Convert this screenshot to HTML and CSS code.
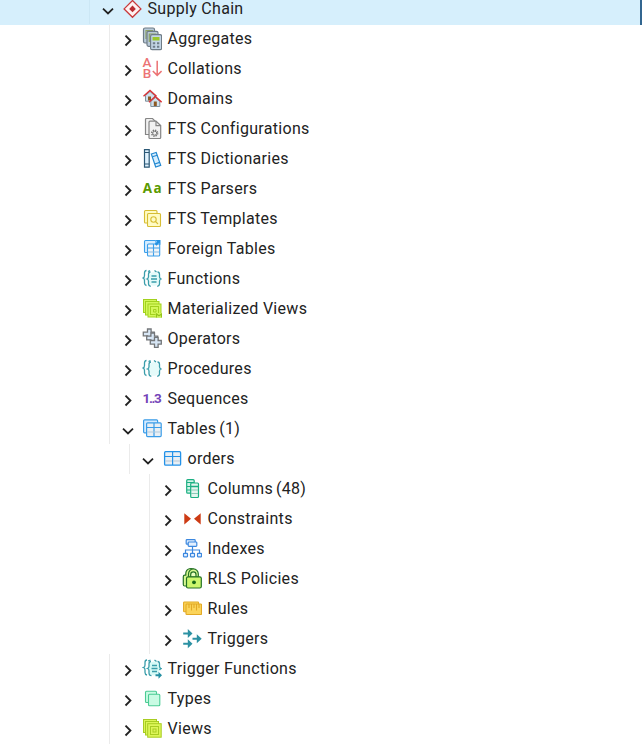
FILE: index.html
```
<!DOCTYPE html>
<html lang="en">
<head>
<meta charset="utf-8">
<title>Object Explorer</title>
<link rel="stylesheet" href="styles.css">
</head>
<body>
<svg class="defs" aria-hidden="true">
  <symbol id="right" viewBox="0 0 12 14"><path d="M3.500 1.700l4.900 4.900-4.900 4.900" fill="none" stroke="#222" stroke-width="1.900"/></symbol>
  <symbol id="down" viewBox="0 0 12 14"><path d="M1 4.700l5 4.700 5-4.700" fill="none" stroke="#222" stroke-width="1.800"/></symbol>
</svg>
<ul class="tree">
  <li class="row l0 selected"><svg class="chev"><use href="#down"/></svg>
    <svg class="icon" viewBox="0 0 20 24"><path d="M10.500 3.500l8.400 8.400-8.400 8.400-8.400-8.400z" fill="#fff1f1" stroke="#c8393b" stroke-width="1.300"/><path d="M10.500 8.600l3.300 3.300-3.300 3.300-3.300-3.300z" fill="#b92d32"/></svg>
    <span class="label">Supply Chain</span></li>
  <li class="row l1"><svg class="chev"><use href="#right"/></svg>
    <svg class="icon" viewBox="0 0 20 24"><g fill="#b9cad9" stroke="#6f7c87" stroke-width="1.200"><rect x="1.500" y="1" width="11" height="15" rx="1.500"/><path d="M4 12V3.500h7" fill="none" stroke="#8fa463"/><rect x="5" y="4.300" width="11" height="15" rx="1.500"/><path d="M7.300 15V7h7" fill="none" stroke="#8fa463"/><rect x="8.600" y="7.700" width="11" height="15" rx="1.500" fill="#c3d5e5"/></g><path d="M10.500 10h7v3.500h-7z" fill="#9bc72d"/><path d="M10.800 15.200h2.400v2h-2.400zM15 15.200h2.300v2H15zM10.800 18.700h2.400v2h-2.400zM15 18.700h2.300v2H15z" fill="#6f7d89"/></svg>
    <span class="label">Aggregates</span></li>
  <li class="row l1"><svg class="chev"><use href="#right"/></svg>
    <svg class="icon" viewBox="0 0 20 24"><g class="glyph collate"><text x="0.600" y="9.900">A</text><text x="0.800" y="21">B</text></g><path d="M15.200 3.700v14.500M10.800 14l4.400 4.400 4.400-4.400" fill="none" stroke="#ec7375" stroke-width="1.500"/></svg>
    <span class="label">Collations</span></li>
  <li class="row l1"><svg class="chev"><use href="#right"/></svg>
    <svg class="icon" viewBox="0 0 20 24"><path d="M3.500 8.500L8 4.500l4.500 4v5.700h-9z" fill="#cfe0ee" stroke="#81909c"/><path d="M6 9.500h3v4H6z" fill="#8d5a24"/><path d="M1.500 9.300L8 3.500l6.500 5.800" fill="none" stroke="#d93236" stroke-width="1.400"/><path d="M8.800 14.500l4.500-4 4.500 4v5h-9z" fill="#cfe0ee" stroke="#81909c"/><path d="M11.800 14.500h3V19h-3z" fill="#8d5a24"/><path d="M7 15.200l6.300-5.700 6.300 5.700" fill="none" stroke="#d93236" stroke-width="1.400"/></svg>
    <span class="label">Domains</span></li>
  <li class="row l1"><svg class="chev"><use href="#right"/></svg>
    <svg class="icon" viewBox="0 0 20 24"><g fill="#f1f1f1" stroke="#858585" stroke-width="1.200"><path d="M3.500 17.500V2.500q0-1 1-1h6l4 4v12z"/><path d="M7 20.800V5.200q0-1 1-1h6l4.700 4.300v12q0 1-1 1H8q-1 0-1-.7z"/><path d="M14 4.300v4.400h4.700" fill="none"/></g><circle cx="12.700" cy="16.200" r="3" fill="none" stroke="#757575" stroke-width="1.400" stroke-dasharray="1.350 1"/><circle cx="12.700" cy="16.200" r="2" fill="#f1f1f1" stroke="#757575"/></svg>
    <span class="label">FTS Configurations</span></li>
  <li class="row l1"><svg class="chev"><use href="#right"/></svg>
    <svg class="icon" viewBox="0 0 20 24"><g fill="#dff1fd" stroke="#2b5876" stroke-width="1.200"><path d="M2.500 2.600h4.700v17.600H2.500z"/><path d="M2.500 5.500h4.700M2.500 17h4.700" /></g><g fill="#d8efff" stroke="#2388d0" stroke-width="1.200"><path d="M9.300 7l4.900-1.500 4.500 12.800-5 1.700z"/><path d="M10.300 9.700l5-1.500M12.700 17l5-1.600"/></g></svg>
    <span class="label">FTS Dictionaries</span></li>
  <li class="row l1"><svg class="chev"><use href="#right"/></svg>
    <svg class="icon" viewBox="0 0 20 24"><text class="glyph parser" x="0.700" y="16.300" textLength="19">Aa</text></svg>
    <span class="label">FTS Parsers</span></li>
  <li class="row l1"><svg class="chev"><use href="#right"/></svg>
    <svg class="icon" viewBox="0 0 20 24"><g fill="#fffbc4" stroke="#d7bd34" stroke-width="1.100"><rect x="2.500" y="3.500" width="12.500" height="12.500" rx="1"/><rect x="5.500" y="6.500" width="13" height="13" rx="1"/><circle cx="11.500" cy="12.500" r="2.700"/><path d="M13.500 14.500l2.500 2.500"/></g></svg>
    <span class="label">FTS Templates</span></li>
  <li class="row l1"><svg class="chev"><use href="#right"/></svg>
    <svg class="icon" viewBox="0 0 20 24"><g fill="#d7edff" stroke="#3b9fea" stroke-width="1.100"><rect x="2.500" y="3.500" width="11.500" height="12" rx="1"/><rect x="5.500" y="7" width="12.200" height="12" rx="1" fill="#f2f5f8"/><path d="M5.500 11h12M11.500 7v12"/><path d="M6 15h11" stroke="#91c0e5"/></g><path d="M13.500 3h5v5l-1.700-1.700-2.300 2.500-1.700-1.700 2.300-2.400z" fill="#2492e3"/></svg>
    <span class="label">Foreign Tables</span></li>
  <li class="row l1"><svg class="chev"><use href="#right"/></svg>
    <svg class="icon" viewBox="0 0 20 24"><ellipse cx="12" cy="12" rx="5.500" ry="7" fill="#e5fbfa"/><g fill="none" stroke="#3a9daa" stroke-width="1.300"><path d="M4.500 3.500Q2.500 3.500 2.500 6v2.500q0 2-1.500 2.500 1.500.5 1.500 2.500V16q0 2 2 2.500M8.500 5Q6.500 5 6.500 7.500v2.300q0 1.700-1.500 2.200 1.500.5 1.500 2.300v2.200q0 2.500 2.300 2.800M15.500 5q2 0 2 2.500v2.300q0 1.700 1.500 2.200-1.500.5-1.500 2.300v2.200q0 2.500-2.300 2.800M6 4.500l2-1M12.500 3.500l2 1.500"/><path d="M9.500 9h5M9 12h6M9.500 15h5"/></g></svg>
    <span class="label">Functions</span></li>
  <li class="row l1"><svg class="chev"><use href="#right"/></svg>
    <svg class="icon" viewBox="0 0 20 24"><g fill="#d3f75a" stroke="#a2d11e"><rect x="1.500" y="2.500" width="13" height="13"/><rect x="3.500" y="4.500" width="13.500" height="13.500"/><rect x="6" y="7" width="13" height="13"/><rect x="8.500" y="9.500" width="8" height="8"/><path d="M11.500 12.500h2.500v2.500h-2.500z"/></g><path d="M13.500 16H20v4.500h-6.500z" fill="#d3f75a"/><path d="M14.500 20.500V17l2.500 1.800 2.500-1.800v3.500" fill="none" stroke="#94c41b" stroke-width="1.200"/></svg>
    <span class="label">Materialized Views</span></li>
  <li class="row l1"><svg class="chev"><use href="#right"/></svg>
    <svg class="icon" viewBox="0 0 20 24"><g fill="#d7e6f5" stroke="#737679" stroke-width="1.300"><path id="plus" d="M5.500 2h3.600v3.200h3.200v3.600H9.100V12H5.500V8.800H1.300V5.200h4.200z"/><use href="#plus" x="3.400" y="4"/><use href="#plus" x="7" y="8.300"/></g></svg>
    <span class="label">Operators</span></li>
  <li class="row l1"><svg class="chev"><use href="#right"/></svg>
    <svg class="icon" viewBox="0 0 20 24"><ellipse cx="12" cy="12" rx="5.500" ry="7" fill="#e5fbfa"/><g fill="none" stroke="#3a9daa" stroke-width="1.300"><path d="M4.500 3.500Q2.500 3.500 2.500 6v2.500q0 2-1.500 2.500 1.500.5 1.500 2.500V16q0 2 2 2.500M9 5Q7 5 7 7.500v2.300q0 1.700-1.500 2.200 1.500.5 1.500 2.300v2.200q0 2.500 2.300 2.800M15.500 5q2 0 2 2.500v2.300q0 1.700 1.500 2.200-1.500.5-1.500 2.300v2.200q0 2.500-2.300 2.800M6.500 4.500l2-1M12 3.500l2 1.500"/></g></svg>
    <span class="label">Procedures</span></li>
  <li class="row l1"><svg class="chev"><use href="#right"/></svg>
    <svg class="icon" viewBox="0 0 20 24"><text class="glyph seq" x="0.500" y="16.300" textLength="19.300">1..3</text></svg>
    <span class="label">Sequences</span></li>
  <li class="row l1"><svg class="chev"><use href="#down"/></svg>
    <svg class="icon" viewBox="0 0 20 24"><g stroke="#3a9ce8" stroke-width="1.200"><rect x="1.600" y="2.800" width="14" height="13" rx="1" fill="#d5ebff"/><rect x="4.600" y="5.800" width="14.600" height="13.800" rx="1" fill="#e9eff4"/><path d="M4.800 10.500h14.500M12 6v13.500"/></g><path d="M5.300 15h13.400" stroke="#b1cadd"/></svg>
    <span class="label">Tables</span><span class="count">(1)</span></li>
  <li class="row l2"><svg class="chev"><use href="#down"/></svg>
    <svg class="icon" viewBox="0 0 20 24"><rect x="2.600" y="4.700" width="16" height="13.500" rx="1" fill="#e9eff4" stroke="#2492e8" stroke-width="1.300"/><path d="M3 9.500h15.300M10.600 5v13" stroke="#2492e8" stroke-width="1.200"/><path d="M3.200 14h6.800M11.200 14H18" stroke="#b9c8d4" stroke-width="1.100"/></svg>
    <span class="label">orders</span></li>
  <li class="row l3"><svg class="chev"><use href="#right"/></svg>
    <svg class="icon" viewBox="0 0 20 24"><g stroke="#1caf82" stroke-width="1.200"><rect x="4.700" y="2.700" width="7.500" height="13.500" rx="1" fill="#d0f5e8"/><path d="M5 5.500h7M5 9.500h7M5 13h7"/><rect x="8.700" y="6" width="7.800" height="14.500" rx="1" fill="#e4f5ef"/><path d="M9 9.500h7.500" stroke-width="1.500"/><path d="M9 13h7M9 16.500h7" stroke="#8acbb6"/></g></svg>
    <span class="label">Columns</span><span class="count">(48)</span></li>
  <li class="row l3"><svg class="chev"><use href="#right"/></svg>
    <svg class="icon" viewBox="0 0 20 24"><path d="M2.300 6.200l6.700 5.600-6.700 5.700zM18.700 6.200L12 11.800l6.700 5.700z" fill="#cd3b14"/></svg>
    <span class="label">Constraints</span></li>
  <li class="row l3"><svg class="chev"><use href="#right"/></svg>
    <svg class="icon" viewBox="0 0 20 24"><g fill="#e3f0ff" stroke="#3c88df" stroke-width="1.200"><rect x="4.200" y="2.700" width="9" height="4.500" rx=".8"/><rect x="6.200" y="5" width="8.600" height="4.300" rx=".8"/><path d="M10.500 9.500v7M3.500 16.500V13h14v3.500" fill="none"/><rect x="1.500" y="16.300" width="4" height="3.500" rx=".5"/><rect x="8.500" y="16.300" width="4" height="3.500" rx=".5"/><rect x="15.500" y="16.300" width="4" height="3.500" rx=".5"/></g></svg>
    <span class="label">Indexes</span></li>
  <li class="row l3"><svg class="chev"><use href="#right"/></svg>
    <svg class="icon" viewBox="0 0 20 24"><g stroke="#247225" stroke-width="1.200" stroke-linejoin="round"><path d="M2.800 8.200h1V6.300a5 5 0 0 1 9-2.700l-1 5V19H2.800q-1.500 0-1.500-1.500V9.700q0-1.500 1.500-1.500z" fill="#d9f992"/><path d="M6.500 10V7a4.800 5 0 0 1 9.800 0v3z" fill="#d9f992"/><path d="M8.700 10V7.500a2.600 2.600 0 0 1 5.300 0V10z" fill="#eaffc0"/><rect x="4.500" y="9.800" width="14.800" height="11.200" rx="1.500" fill="#ccf76d"/></g><circle cx="12" cy="15.300" r="1.900" fill="#166b18"/></svg>
    <span class="label">RLS Policies</span></li>
  <li class="row l3"><svg class="chev"><use href="#right"/></svg>
    <svg class="icon" viewBox="0 0 20 24"><g fill="#fbd45a" stroke="#e2a925" stroke-width="1.100"><rect x="1.600" y="5" width="15" height="9.700" rx=".8"/><rect x="4" y="7" width="15.500" height="10.500" rx=".8"/><path d="M7 7v4M9.500 7v6.500M12 7v4M14.500 7v6.500M17 7v4"/></g></svg>
    <span class="label">Rules</span></li>
  <li class="row l3"><svg class="chev"><use href="#right"/></svg>
    <svg class="icon" viewBox="0 0 20 24"><path d="M1.200 5.500h4.600V2L10.500 6.500 5.800 11V7.500H1.200zM1.200 15.800h4.600v-3.500l4.700 4.500-4.700 4.500v-3.500H1.200zM10.500 10.700h4.300V7.200l4.900 4.500-4.900 4.500v-3.500h-4.300z" fill="#2c91a3"/></svg>
    <span class="label">Triggers</span></li>
  <li class="row l1"><svg class="chev"><use href="#right"/></svg>
    <svg class="icon" viewBox="0 0 20 24"><ellipse cx="12" cy="11.500" rx="5.500" ry="7" fill="#d5faf6"/><g fill="none" stroke="#3a9daa" stroke-width="1.300"><path d="M5 3Q3 3 3 5.500V8q0 2-1.500 2.500Q3 11 3 13v2.500q0 2 2 2.500M9 4.500q-2 0-2 2.500v2.300q0 1.700-1.500 2.200 1.500.5 1.500 2.300V16q0 2.500 2.500 2.700M15.500 4.500q2 0 2 2.500v2.300q0 1.700 1.500 2.200-1.200.3-1.400 1.700M6 4l2.500-1M12.500 3l2 1.500"/><path d="M10 8.500h5M9.500 11.500h6M10 14.500h5"/></g><path d="M13.500 17.200h3v-2.500l3.500 3.500-3.500 3.500v-2.500h-3z" fill="#248fa2"/></svg>
    <span class="label">Trigger Functions</span></li>
  <li class="row l1"><svg class="chev"><use href="#right"/></svg>
    <svg class="icon" viewBox="0 0 20 24"><g fill="#c9fbe3" stroke="#4bcb94" stroke-width="1.100"><rect x="3.500" y="4.200" width="11" height="11.300" rx="1"/><rect x="6.500" y="7.200" width="11.300" height="11.600" rx="1"/></g></svg>
    <span class="label">Types</span></li>
  <li class="row l1"><svg class="chev"><use href="#right"/></svg>
    <svg class="icon" viewBox="0 0 20 24"><g fill="#dcf558" stroke="#a8cc22"><rect x="1.500" y="2.500" width="13" height="13"/><rect x="3.500" y="4.500" width="13" height="13.500"/><rect x="5.700" y="6.700" width="13.500" height="13.500"/><rect x="8.500" y="9.500" width="8" height="8"/><rect x="11" y="12" width="3" height="3"/></g></svg>
    <span class="label">Views</span></li>
</ul>
</body>
</html>
```
FILE: styles.css
```
* {
  box-sizing: border-box;
}

body {
  margin: 0;
  height: 747px;
  overflow: hidden;
  background: #fff;
  color: #222;
  font-family: Roboto, sans-serif;
  font-size: 16px;
}

.defs {
  display: none;
}

.tree {
  margin: -6px 0 0;
  padding: 0;
  list-style: none;
}

.row {
  display: flex;
  align-items: center;
  height: 30px;
  line-height: 30px;
  white-space: nowrap;
}

/* indent guide in front of every row */
.row::before {
  content: "";
  flex: none;
  width: 1px;
  height: 30px;
  margin-right: 12px;
  background: #ebebeb;
}

.l0 { padding-left: 89px; }
.l1 { padding-left: 109px; }
.l2 { padding-left: 129px; }
.l3 { padding-left: 149px; }

.selected {
  height: 31px;
  margin-bottom: -1px;
  padding-bottom: 1px;
  background: #d6effc;
  border-right: 2px solid #326690;
}

.selected::before {
  background: #cce7f5;
}

.chev {
  flex: none;
  width: 12px;
  height: 14px;
  margin: 4px 8px 0 0;
}

.icon {
  flex: none;
  width: 20px;
  height: 24px;
  margin-right: 5.5px;
}

.label,
.count {
  letter-spacing: 0.3px;
}

.count {
  margin-left: 3px;
}

.glyph {
  font-family: Roboto, sans-serif;
  font-weight: 700;
}

.collate {
  fill: #ec7375;
  font-size: 13.5px;
  font-weight: 500;
}

.parser {
  fill: #5b9a00;
  font-family: "Open Sans", sans-serif;
  font-size: 13.5px;
}

.seq {
  fill: #7444b8;
  font-size: 13.5px;
}
```
